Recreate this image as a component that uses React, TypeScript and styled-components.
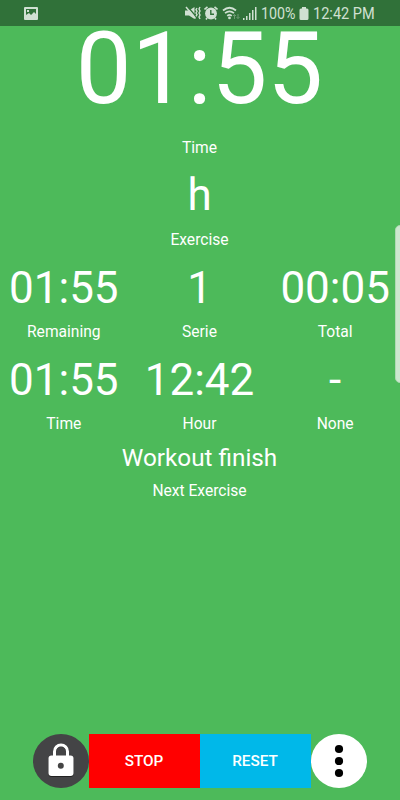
import React from "react";
import styled, { createGlobalStyle } from "styled-components";

const GlobalStyle = createGlobalStyle`
  * { box-sizing: border-box; }
  body { margin: 0; background: #4dba5a; }
`;

const Screen = styled.main`
  position: relative;
  display: flex;
  flex-direction: column;
  width: 400px;
  height: 800px;
  overflow: hidden;
  background: #4dba5a;
  color: #fff;
  font-family: Roboto, sans-serif;
`;

const StatusBar = styled.header`
  display: flex;
  align-items: center;
  flex: none;
  height: 26px;
  padding: 0 25px 0 24px;
  background: #307139;
  color: #d0e0d2;
  font-size: 16px;
  line-height: 26px;
  white-space: nowrap;
`;

const StatusIcons = styled.div`
  display: flex;
  align-items: center;
  margin-left: auto;
`;

const StatusItem = styled.span<{ $width: number; $gap: number }>`
  display: flex;
  flex: none;
  width: ${(p) => p.$width}px;
  margin-right: ${(p) => p.$gap}px;
`;

const CondensedText = styled.span<{ $scale: number }>`
  flex: none;
  padding-top: 1px;
  line-height: 25px;
  transform: scaleX(${(p) => p.$scale});
  transform-origin: left center;
`;

const Board = styled.section`
  display: flex;
  flex-direction: column;
  flex: 1;
`;

const MetricRow = styled.div<{ $top?: number }>`
  display: grid;
  grid-auto-columns: minmax(0, 1fr);
  grid-auto-flow: column;
  margin: ${(p) => p.$top ?? 0}px -3px 0 -4px;
`;

const Metric = styled.div`
  display: flex;
  flex-direction: column;
  align-items: center;
  white-space: nowrap;
`;

const Value = styled.div<{ $size: number; $height: number }>`
  font-size: ${(p) => p.$size}px;
  line-height: ${(p) => p.$height}px;
`;

const Label = styled.div<{ $gap: number }>`
  margin-top: ${(p) => p.$gap}px;
  font-size: 15.6px;
  line-height: 20px;
`;

const Controls = styled.footer`
  display: grid;
  grid-template-columns: 56px 111px 111px 56px;
  height: 54px;
  margin: 0 33px 12px;
`;

const ActionButton = styled.button<{ $color: string }>`
  border: 0;
  padding: 1px 1px 0 0;
  background: ${(p) => p.$color};
  color: #fff;
  font: 500 15.3px/53px Roboto, sans-serif;
`;

const RoundButton = styled.button<{ $color: string }>`
  display: flex;
  align-items: center;
  justify-content: center;
  border: 0;
  padding: 0;
  border-radius: 50%;
  background: ${(p) => p.$color};
`;

const EdgeHandle = styled.div`
  position: absolute;
  top: 225px;
  right: -6px;
  width: 11px;
  height: 158px;
  border: 1px solid #b0d9b4;
  border-radius: 5px;
  background: #cce8cf;
`;

const metrics = [
  [["01:55", "Remaining"], ["1", "Serie"], ["00:05", "Total"]],
  [["01:55", "Time"], ["12:42", "Hour"], ["-", "None"]],
];

const PictureIcon = () => (
  <svg width="14" height="13" viewBox="0 0 14 13">
    <path fill="#d0e0d2" fillRule="evenodd" d="M1 0h12q1 0 1 1v11q0 1-1 1H1q-1 0-1-1V1q0-1 1-1ZM2 2v6l3-2 2 2 3-3 2 2V2ZM3 3h2v2H3Z" />
  </svg>
);

const MuteIcon = () => (
  <svg width="17" height="14" viewBox="0 0 17 14" fill="none" stroke="#d0e0d2">
    <path fill="#d0e0d2" stroke="none" d="M0 4.500h4L9.500 1v12L4 9.500H0Z" />
    <path stroke="#307139" strokeWidth="1.300" d="m2.500.5 8.500 10" />
    <path strokeWidth="1.500" d="m1 1 9.500 11.500" />
    <path strokeWidth="1.400" d="m12 2-1 1.700 1 1.600-1 1.700 1 1.600-1 1.700M15 1l-1 2 1 2-1 2 1 2-1 2 1 2" />
  </svg>
);

const AlarmIcon = () => (
  <svg width="14" height="14" viewBox="0 0 14 14">
    <circle cx="7" cy="7.500" r="5.900" fill="#d0e0d2" />
    <path fill="none" stroke="#d0e0d2" strokeWidth="1.600" d="M.5 3.500l3-2.600M13.500 3.500l-3-2.600M3 12l-1 1.500M11 12l1 1.500" />
    <path fill="none" stroke="#307139" strokeWidth="1.400" d="M6.800 4v4.200h3.200" />
  </svg>
);

const WifiIcon = () => (
  <svg width="18" height="14" viewBox="0 0 18 14" fill="none" stroke="#d0e0d2">
    <path strokeWidth="1.700" d="M1 4.500q6.500-5.500 13 0M3 7.200q4.500-3.700 9 0M5.200 9.800q2.300-1.800 4.600 0" />
    <circle cx="7.500" cy="11.900" r="1.400" fill="#d0e0d2" stroke="none" />
    <path stroke="#6d9b73" d="M12.500 13V8.500m-1.500 1.500 1.500-1.500L14 10M16 8v4.500M14.500 11l1.500 1.500 1.500-1.500" />
  </svg>
);

const SignalIcon = () => (
  <svg width="14" height="13" viewBox="0 0 14 13">
    <path fill="#d0e0d2" d="M0 11h1.500v2H0ZM3 9h1.500v4H3ZM6 6h1.500v7H6ZM9 3h1.500v10H9ZM12 0h1.500v13H12Z" />
  </svg>
);

const BatteryIcon = () => (
  <svg width="10" height="13" viewBox="0 0 10 13">
    <path fill="#d0e0d2" d="M3 0h4v1.500h1q1.500 0 1.500 1.500v8.500Q9.500 13 8 13H2Q.5 13 .5 11.500V3Q.5 1.500 2 1.500h1Z" />
  </svg>
);

const LockIcon = () => (
  <svg width="26" height="36" viewBox="0 0 26 36">
    <path fill="none" stroke="#222" strokeWidth="3" d="M6.500 14V9a6.500 6.500 0 0 1 13 0v5" />
    <rect x=".5" y="13.500" width="25" height="20.500" rx="3" fill="#222" />
    <path fill="none" stroke="#fff" strokeWidth="3" d="M6.500 13V8.500a6.500 6.500 0 0 1 13 0V13" />
    <rect x=".5" y="12.500" width="25" height="20.500" rx="3" fill="#fff" />
    <circle cx="12.800" cy="22.700" r="3" fill="#444" />
  </svg>
);

const MoreIcon = () => (
  <svg width="10" height="34" viewBox="0 0 10 34">
    <circle cx="5" cy="5" r="4.100" />
    <circle cx="5" cy="17" r="4.100" />
    <circle cx="5" cy="29" r="4.100" />
  </svg>
);

export default function App() {
  return (
    <Screen>
      <GlobalStyle />
      <StatusBar>
        <PictureIcon />
        <StatusIcons>
          <StatusItem $width={17} $gap={2}><MuteIcon /></StatusItem>
          <StatusItem $width={14} $gap={4}><AlarmIcon /></StatusItem>
          <StatusItem $width={18} $gap={3}><WifiIcon /></StatusItem>
          <StatusItem $width={14} $gap={4}><SignalIcon /></StatusItem>
          <StatusItem $width={35} $gap={3}><CondensedText $scale={0.89}>100%</CondensedText></StatusItem>
          <StatusItem $width={10} $gap={4}><BatteryIcon /></StatusItem>
          <StatusItem $width={62} $gap={0}><CondensedText $scale={0.91}>12:42 PM</CondensedText></StatusItem>
        </StatusIcons>
      </StatusBar>
      <Board>
        <MetricRow>
          <Metric><Value $size={99.3} $height={86}>01:55</Value><Label $gap={26}>Time</Label></Metric>
        </MetricRow>
        <MetricRow $top={11}>
          <Metric><Value $size={44} $height={52}>h</Value><Label $gap={9}>Exercise</Label></Metric>
        </MetricRow>
        {metrics.map((row, i) => (
          <MetricRow key={i} $top={12}>
            {row.map(([value, label]) => (
              <Metric key={label}><Value $size={44} $height={52}>{value}</Value><Label $gap={8}>{label}</Label></Metric>
            ))}
          </MetricRow>
        ))}
        <MetricRow $top={9}>
          <Metric><Value $size={24.3} $height={30}>Workout finish</Value><Label $gap={8}>Next Exercise</Label></Metric>
        </MetricRow>
      </Board>
      <Controls>
        <RoundButton $color="#444446" aria-label="Lock"><LockIcon /></RoundButton>
        <ActionButton $color="#ff0000">STOP</ActionButton>
        <ActionButton $color="#00b8e9">RESET</ActionButton>
        <RoundButton $color="#ffffff" aria-label="More options"><MoreIcon /></RoundButton>
      </Controls>
      <EdgeHandle />
    </Screen>
  );
}
